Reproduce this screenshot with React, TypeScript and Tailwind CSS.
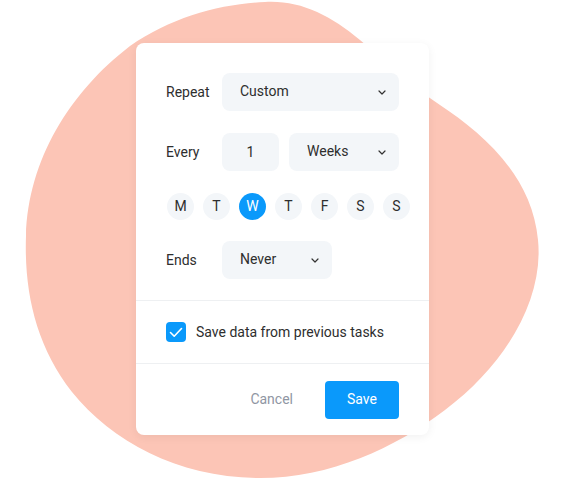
import { useState } from "react";

const days = ["M", "T", "W", "T", "F", "S", "S"];

function Chevron() {
  return (
    <svg width="8" height="5" viewBox="0 0 8 5" fill="none" className="shrink-0">
      <path d="M1 1l3 3 3-3" stroke="#333" strokeWidth="1.2" strokeLinecap="round" strokeLinejoin="round" />
    </svg>
  );
}

function Select({ value, width }: { value: string; width: string }) {
  return (
    <button
      className={`flex h-[38px] items-center justify-between rounded-lg bg-[#f3f6f9] pl-[18px] pr-[13px] text-[14px] text-[#2e2e2e] ${width}`}
    >
      <span className="-mt-[2px]">{value}</span>
      <Chevron />
    </button>
  );
}

export default function App() {
  const [selectedDay, setSelectedDay] = useState(2);
  const [keepData, setKeepData] = useState(true);

  return (
    <div className="relative h-[478px] w-[567px] overflow-hidden bg-white font-['Roboto',sans-serif]">
      {/* background blob */}
      <svg className="absolute inset-0" width="567" height="478" viewBox="0 0 567 478">
        <path
          d="M265,2 C300,0 330,15 360,40 C390,65 410,85 440,105 C482,133 532,175 538,240 C544,300 505,365 445,410 C395,448 330,478 260,478 C180,478 112,442 72,392 C36,346 24,292 26,236 C28,160 70,92 130,46 C172,17 220,4 265,2 Z"
          fill="#fcc5b6"
        />
      </svg>

      <div className="relative ml-[136px] mt-[43px] flex h-[392px] w-[293px] flex-col rounded-lg bg-white shadow-[0_2px_10px_rgba(0,0,0,0.06)]">
        <div className="flex flex-col px-[30px] pt-[30px] pb-[21px]">
          <div className="flex items-center">
            <span className="w-[56px] text-[14px] text-[#2e2e2e]">Repeat</span>
            <Select value="Custom" width="w-[177px]" />
          </div>

          <div className="mt-[22px] flex items-center">
            <span className="w-[56px] text-[14px] text-[#2e2e2e]">Every</span>
            <div className="flex h-[38px] w-[57px] items-center justify-center rounded-lg bg-[#f3f6f9] text-[14px] text-[#2e2e2e]">
              1
            </div>
            <div className="ml-[10px]">
              <Select value="Weeks" width="w-[110px]" />
            </div>
          </div>

          <div className="-mr-[12px] mt-[22px] flex gap-[9px] pl-[1px]">
            {days.map((d, i) => (
              <button
                key={i}
                onClick={() => setSelectedDay(i)}
                className={`flex h-[27px] w-[27px] shrink-0 items-center justify-center rounded-full text-[14px] ${
                  selectedDay === i ? "bg-[#0a99fb] text-white" : "bg-[#f3f6f9] text-[#2e2e2e]"
                }`}
              >
                {d}
              </button>
            ))}
          </div>

          <div className="mt-[21px] flex items-center">
            <span className="w-[56px] text-[14px] text-[#2e2e2e]">Ends</span>
            <Select value="Never" width="w-[110px]" />
          </div>
        </div>

        <div className="flex h-[64px] items-center gap-[10px] border-y border-[#eef0f2] px-[30px]">
          <button
            onClick={() => setKeepData(!keepData)}
            className={`flex h-[20px] w-[20px] items-center justify-center rounded-[4px] ${
              keepData ? "bg-[#0a99fb]" : "border border-gray-300 bg-white"
            }`}
          >
            {keepData && (
              <svg width="14" height="11" viewBox="0 0 14 11" fill="none">
                <path d="M1.5 5.5l3.7 3.7L12.5 1.5" stroke="white" strokeWidth="1.6" strokeLinecap="round" strokeLinejoin="round" />
              </svg>
            )}
          </button>
          <span className="text-[14px] text-[#2e2e2e]">Save data from previous tasks</span>
        </div>

        <div className="flex flex-1 items-center justify-end gap-[32px] px-[30px]">
          <button className="text-[14px] text-[#8f96a3]">Cancel</button>
          <button className="h-[38px] w-[74px] rounded-[4px] bg-[#0a99fb] text-[14px] text-white">Save</button>
        </div>
      </div>
    </div>
  );
}
